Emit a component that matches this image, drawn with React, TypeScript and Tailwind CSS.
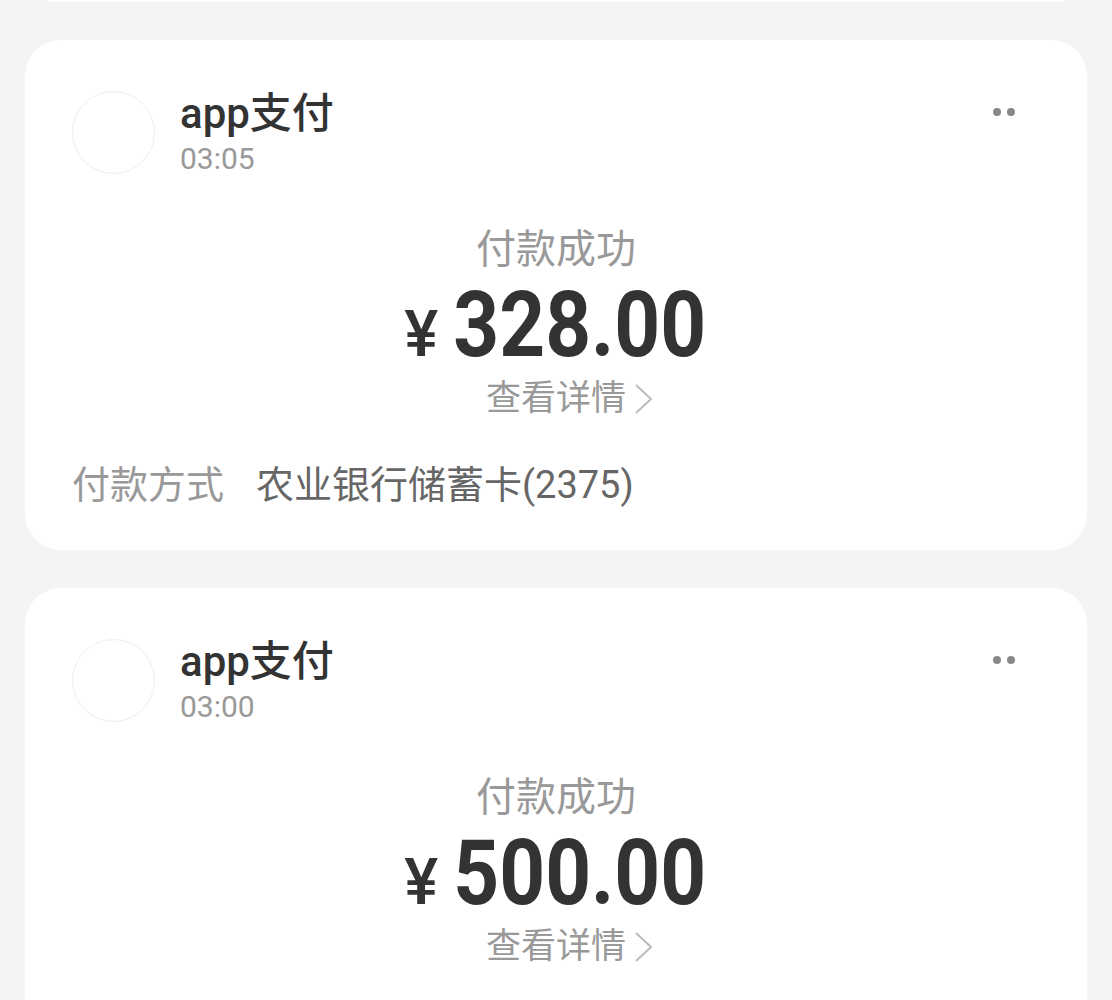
import React from "react";

const FONT = { fontFamily: '"Roboto","Noto Sans CJK SC",sans-serif' } as const;

type Item = { time: string; amount: string };

const items: Item[] = [
  { time: "03:05", amount: "328.00" },
  { time: "03:00", amount: "500.00" },
];

function Card({ item }: { item: Item }) {
  return (
    <div className="bg-white rounded-[36px] h-[510px] shrink-0 px-[47px] pt-[51px] flex flex-col">
      <div className="flex items-start">
        <div className="w-[83px] h-[83px] rounded-full border border-[#eeeeee] shrink-0" />
        <div className="ml-[25px] flex flex-col">
          <div className="text-[42px] leading-[46px] font-medium text-[#333333]">app支付</div>
          <div className="text-[30px] leading-[34px] text-[#999999] mt-[5px]">{item.time}</div>
        </div>
        <div className="ml-auto mr-[25px] mt-[17px] flex gap-[6px]">
          <span className="w-[8px] h-[8px] rounded-full bg-[#888888]" />
          <span className="w-[8px] h-[8px] rounded-full bg-[#888888]" />
        </div>
      </div>
      <div className="flex flex-col items-center mt-[50px]">
        <div className="text-[40px] leading-[48px] text-[#999999]">付款成功</div>
        <div className="flex items-baseline leading-[96px] text-[#333333] mt-[3px]">
          <span className="text-[64px] font-medium mr-[14px]">¥</span>
          <span className="text-[91px] font-bold inline-block scale-x-[0.88] origin-center mx-[-16px]">{item.amount}</span>
        </div>
        <div className="relative text-[35px] leading-[44px] text-[#999999] mt-[-6px]">
          查看详情
          <svg className="absolute left-full top-[6px] ml-[8px]" width="20" height="32" viewBox="0 0 20 32" fill="none">
            <path d="M2 2 L17 16 L2 30" stroke="#bbbbbb" strokeWidth="2" />
          </svg>
        </div>
      </div>
      <div className="flex items-center mt-[40px] text-[38px] leading-[48px]">
        <span className="text-[#999999]">付款方式</span>
        <span className="text-[#666666] ml-[32px]">农业银行储蓄卡(2375)</span>
      </div>
    </div>
  );
}

export default function App() {
  return (
    <div className="w-[1112px] h-[1000px] overflow-hidden bg-[#f4f4f4] px-[25px] flex flex-col gap-[38px]" style={FONT}>
      <div className="bg-white rounded-[36px] h-[60px] mt-[-58px] shrink-0" />
      {items.map((it, i) => (
        <Card key={i} item={it} />
      ))}
    </div>
  );
}
